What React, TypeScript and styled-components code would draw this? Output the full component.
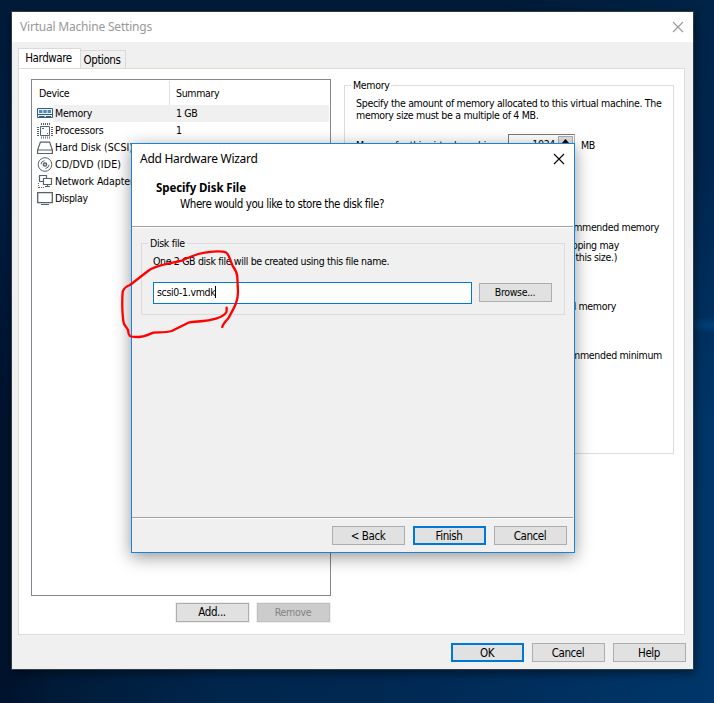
import React from "react";
import styled, { createGlobalStyle, css } from "styled-components";

const small = css`
  font-family: "DejaVu Sans Condensed", "DejaVu Sans", sans-serif;
  font-stretch: condensed;
  font-size: 10.5px;
  letter-spacing: -0.33px;
`;
const regular = css`
  font-family: "DejaVu Sans Condensed", "DejaVu Sans", sans-serif;
  font-stretch: condensed;
  font-size: 11.5px;
  letter-spacing: -0.43px;
`;

const GlobalStyle = createGlobalStyle`
  * { box-sizing: border-box; }
  body { margin: 0; overflow: hidden; color: #000; ${small} }
`;

const Desktop = styled.div`
  position: relative;
  width: 714px;
  height: 703px;
  padding: 11px 0 0 11px;
  background:
    radial-gradient(ellipse 40px 8px at 712px 325px, #004078, transparent),
    linear-gradient(100deg, transparent 60%, rgba(0, 64, 120, 0.35) 97%),
    linear-gradient(180deg, #001b38 0, #001d40 25%, transparent 60%),
    linear-gradient(90deg, #00122c 0, #001b38 8%, #00264d 32%, #002a55 70%, #003162 100%);
`;

const Window = styled.main`
  width: 683px;
  height: 659px;
  display: flex;
  flex-direction: column;
  border: 1px solid #2c3c48;
  background: #f0f0f0;
  box-shadow: 1px 3px 9px rgba(0, 0, 0, 0.5);
`;

const TitleBar = styled.header<{ $active?: boolean }>`
  flex: none;
  height: 30px;
  display: flex;
  align-items: center;
  justify-content: space-between;
  padding: 0 9px 1px 8px;
  background: #fff;
  color: ${(p) => (p.$active ? "#000" : "#999")};
  font: 12px/28px "Noto Sans", sans-serif;
  letter-spacing: ${(p) => (p.$active ? "-0.27px" : "-0.2px")};
`;

const TabStrip = styled.nav`
  flex: none;
  height: 26px;
  padding: 6px 0 0 6px;
  display: flex;
  align-items: flex-end;
`;

const Tab = styled.div<{ $active?: boolean }>`
  ${regular}
  width: ${(p) => (p.$active ? 63 : 45)}px;
  height: ${(p) => (p.$active ? 21 : 18)}px;
  margin-bottom: ${(p) => (p.$active ? -1 : 0)}px;
  padding: 1px 2px 0 0;
  border: 1px solid #d9d9d9;
  border-left-width: ${(p) => (p.$active ? 1 : 0)}px;
  border-bottom: 0;
  background: ${(p) => (p.$active ? "#fff" : "#f0f0f0")};
  text-align: center;
  line-height: 17px;
`;

const Panel = styled.section`
  flex: none;
  width: 667px;
  height: 567px;
  margin-left: 6px;
  padding: 10px 0 0 12px;
  display: flex;
  gap: 13px;
  border: 1px solid #dcdcdc;
  background: #fff;
`;

const DeviceColumn = styled.div`
  width: 300px;
`;

const DeviceList = styled.div`
  height: 517px;
  border: 1px solid #828790;
`;

const ListHeader = styled.div`
  display: flex;
  height: 25px;
  padding-top: 1px;
  line-height: 25px;
`;

const HeaderCell = styled.div<{ $first?: boolean }>`
  width: ${(p) => (p.$first ? "138px" : "auto")};
  padding-left: ${(p) => (p.$first ? 7 : 6)}px;
  border-right: ${(p) => (p.$first ? "1px solid #e0e0e0" : "0")};
`;

const DeviceRow = styled.div`
  display: flex;
  height: 17px;
  padding: 0 1px 0 5px;
  line-height: 17px;
  white-space: nowrap;
`;

const DeviceCells = styled.div<{ $selected?: boolean }>`
  flex: 1;
  display: grid;
  grid-template-columns: 121px 1fr;
  padding-left: 2px;
  background: ${(p) => (p.$selected ? "#f0f0f0" : "transparent")};
`;

const DeviceName = styled.span<{ $spacing: number }>`
  letter-spacing: ${(p) => p.$spacing}px;
`;

const ButtonRow = styled.div<{ $top: number; $right: number }>`
  display: flex;
  justify-content: flex-end;
  gap: 8px;
  padding: ${(p) => p.$top}px ${(p) => p.$right}px 0 0;
`;

const Button = styled.button<{ $primary?: boolean; $halo?: boolean; $small?: boolean }>`
  ${(p) => (p.$small ? small : regular)}
  flex: none;
  width: 73px;
  height: 19px;
  padding: ${(p) => (p.$small || p.$halo ? "0 1px 0 0" : "2px 1px 0 0")};
  border: ${(p) => (p.$primary ? "2px solid #0078d7" : "1px solid #adadad")};
  border-radius: 0;
  background: #e1e1e1;
  color: #000;
  line-height: ${(p) => (p.$primary ? 13 : 15)}px;
  box-shadow: ${(p) => (p.$halo ? "0 0 0 1px #f0f0f0" : "none")};

  &:disabled {
    border-color: #bfbfbf;
    background: #ccc;
    color: #838383;
  }
`;

const Group = styled.div<{ $surface: string }>`
  border: 1px solid #dcdcdc;
  background: ${(p) => p.$surface};
`;

const MemoryGroup = styled(Group)`
  width: 330px;
  height: 369px;
  margin-top: 6px;
  white-space: nowrap;
`;

const GroupLabel = styled.div<{ $surface: string }>`
  width: fit-content;
  margin: -8px 0 0 6px;
  padding: 0 2px;
  background: ${(p) => p.$surface};
  line-height: 15px;
`;

const Description = styled.p`
  margin: 4px 0 0 11px;
  line-height: 12px;
  letter-spacing: -0.31px;
`;

const MemoryField = styled.div`
  display: grid;
  grid-template-columns: 146px 67px auto;
  column-gap: 6px;
  margin: 13px 0 0 11px;
  line-height: 23px;
`;

const Spinner = styled.div`
  display: flex;
  justify-content: space-between;
  height: 23px;
  padding: 1px;
  border: 1px solid #7a7a7a;
  border-right-color: #b0b4bb;
  line-height: 17px;
`;

const SpinnerValue = styled.span`
  flex: 1;
  padding-right: 3px;
  text-align: right;
  line-height: 16px;
`;

const SpinnerButton = styled.span`
  width: 15px;
  height: 10px;
  display: flex;
  justify-content: center;
  padding-top: 2px;
  border: 1px solid #adadad;
  background: #e1e1e1;
`;

const Note = styled.div<{ $top: number; $right: number }>`
  margin-top: ${(p) => p.$top}px;
  padding-right: ${(p) => p.$right}px;
  text-align: right;
  line-height: 12px;
`;

const Dialog = styled.section`
  position: absolute;
  left: 131px;
  top: 143px;
  width: 444px;
  height: 410px;
  display: flex;
  flex-direction: column;
  border: 1px solid #1883d7;
  background: #f0f0f0;
  box-shadow: 0 4px 16px rgba(0, 0, 0, 0.42);
`;

const WizardHeading = styled.div`
  flex: none;
  height: 52px;
  padding-top: 6px;
  background: #fff;
`;

const Heading = styled.h1`
  margin: 0 0 0 24px;
  font: bold 11.5px/16px "Noto Sans", sans-serif;
  letter-spacing: -0.1px;
`;

const Question = styled.p`
  ${regular}
  margin: 0 0 0 48px;
  line-height: 17px;
`;

const Rule = styled.div`
  flex: none;
  height: 2px;
  margin-right: 1px;
  border-top: 1px solid #a0a0a0;
  background: #fff;
`;

const WizardBody = styled.div`
  height: 289px;
  padding: 15px 9px 0;
`;

const DiskGroup = styled(Group)`
  height: 72px;
`;

const DiskText = styled.p`
  margin: 3px 0 0 11px;
  line-height: 14px;
  letter-spacing: -0.35px;
`;

const FileRow = styled.div`
  display: flex;
  align-items: flex-start;
  gap: 7px;
  margin: 14px 0 0 11px;

  ${Button} {
    margin-top: 1px;
  }
`;

const FileInput = styled.div`
  width: 319px;
  height: 22px;
  display: flex;
  align-items: center;
  padding: 0 0 2px 3px;
  border: 1px solid #0078d7;
  background: #fff;
`;

const Caret = styled.span`
  width: 1px;
  height: 12px;
  background: #000;
`;

const Annotation = styled.svg`
  position: absolute;
  left: 110px;
  top: 240px;
  pointer-events: none;
`;

const Icon = styled.svg`
  flex: none;
  display: block;
  width: 16px;
  height: 17px;
  fill: none;
  stroke: #53636e;
`;

function CloseIcon() {
  return (
    <svg width="12" height="12" viewBox="0 0 12 12" stroke="currentColor" strokeWidth="1.1">
      <path d="M1 1 11 11M11 1 1 11" />
    </svg>
  );
}

const drawings: Record<string, React.ReactNode> = {
  Memory: (
    <g stroke="#315f87">
      <path fill="#e8f2fa" d="M.5 3.5h15v9H.5z" />
      <path fill="#5689b3" stroke="none" d="M2 5h3.4v3H2zM6.3 5h3.4v3H6.3zM10.6 5H14v3h-3.4z" />
      <path d="M.5 9.5h15M2 11.5h5.5M9 11.5h5" />
    </g>
  ),
  Processors: (
    <>
      <path d="M3.5 4.5h9v9h-9z" />
      <path
        strokeDasharray="1 1"
        d="M4 1.5h9M4 16h9M.5 5v9M15.5 5v9M4 2.5h9M4 15h9M1.5 5v9M14.5 5v9"
      />
      <path d="M5 6.5h2M10 11.5h1" />
    </>
  ),
  "Hard Disk (SCSI)": (
    <path strokeWidth="1.2" d="M3.4 3.1h9.2L15.4 11H.6zM.6 11h14.8v3.5H.6z" />
  ),
  "CD/DVD (IDE)": (
    <>
      <circle cx="8" cy="8.5" r="6.8" />
      <circle cx="8" cy="8.5" r="1.6" strokeWidth="1.5" />
      <path d="M4 8.3A4 4 0 0 1 7.5 4.7M12 8.8a4 4 0 0 1-3.5 3.6" />
    </>
  ),
  "Network Adapter": (
    <>
      <path strokeWidth="1.2" d="M6 8.5H2.5v-6h7v3M6.5 5.5h8v6h-8zM3 8.5h3M10.5 12v2M8 13.5h5" />
      <path strokeDasharray="1 1" d="M1.5 10v5M2 14.5h6" />
    </>
  ),
  Display: (
    <>
      <path strokeWidth="1.3" d="M.7 2.7h14.6v10H.7z" />
      <path d="M4 14.5h8" />
    </>
  ),
};

const devices = [
  { name: "Memory", summary: "1 GB", spacing: -0.24 },
  { name: "Processors", summary: "1", spacing: -0.2 },
  { name: "Hard Disk (SCSI)", summary: "", spacing: 0.02 },
  { name: "CD/DVD (IDE)", summary: "", spacing: 0.15 },
  { name: "Network Adapter", summary: "", spacing: -0.07 },
  { name: "Display", summary: "", spacing: -0.3 },
];

export default function App() {
  return (
    <Desktop>
      <GlobalStyle />
      <Window>
        <TitleBar>
          Virtual Machine Settings
          <CloseIcon />
        </TitleBar>
        <TabStrip>
          <Tab $active>Hardware</Tab>
          <Tab>Options</Tab>
        </TabStrip>
        <Panel>
          <DeviceColumn>
            <DeviceList>
              <ListHeader>
                <HeaderCell $first>Device</HeaderCell>
                <HeaderCell>Summary</HeaderCell>
              </ListHeader>
              {devices.map(({ name, summary, spacing }, i) => (
                <DeviceRow key={name}>
                  <Icon viewBox="0 0 16 17">{drawings[name]}</Icon>
                  <DeviceCells $selected={i === 0}>
                    <DeviceName $spacing={spacing}>{name}</DeviceName>
                    <span>{summary}</span>
                  </DeviceCells>
                </DeviceRow>
              ))}
            </DeviceList>
            <ButtonRow $top={7} $right={1}>
              <Button $halo>Add...</Button>
              <Button $halo $small disabled>
                Remove
              </Button>
            </ButtonRow>
          </DeviceColumn>
          <MemoryGroup $surface="#fff">
            <GroupLabel $surface="#fff">Memory</GroupLabel>
            <Description>
              Specify the amount of memory allocated to this virtual machine. The
              <br />
              memory size must be a multiple of 4 MB.
            </Description>
            <MemoryField>
              <span>Memory for this virtual machine:</span>
              <Spinner>
                <SpinnerValue>1024</SpinnerValue>
                <SpinnerButton>
                  <svg width="7" height="4" viewBox="0 0 7 4">
                    <path d="M0 4 3.5 0 7 4z" />
                  </svg>
                </SpinnerButton>
              </Spinner>
              <span>MB</span>
            </MemoryField>
            <Note $top={64} $right={14}>Maximum recommended memory</Note>
            <Note $top={6} $right={54}>(Memory swapping may</Note>
            <Note $top={0} $right={56}>occur beyond this size.)</Note>
            <Note $top={37} $right={57}>Recommended memory</Note>
            <Note $top={37} $right={11}>Guest OS recommended minimum</Note>
          </MemoryGroup>
        </Panel>
        <ButtonRow $top={8} $right={7}>
          <Button $primary>OK</Button>
          <Button>Cancel</Button>
          <Button>Help</Button>
        </ButtonRow>
      </Window>

      <Dialog>
        <TitleBar $active>
          Add Hardware Wizard
          <CloseIcon />
        </TitleBar>
        <WizardHeading>
          <Heading>Specify Disk File</Heading>
          <Question>Where would you like to store the disk file?</Question>
        </WizardHeading>
        <Rule />
        <WizardBody>
          <DiskGroup $surface="#f0f0f0">
            <GroupLabel $surface="#f0f0f0">Disk file</GroupLabel>
            <DiskText>One 2 GB disk file will be created using this file name.</DiskText>
            <FileRow>
              <FileInput>
                scsi0-1.vmdk
                <Caret />
              </FileInput>
              <Button $small>Browse...</Button>
            </FileRow>
          </DiskGroup>
        </WizardBody>
        <Rule />
        <ButtonRow $top={7} $right={7}>
          <Button>&lt; Back</Button>
          <Button $primary>Finish</Button>
          <Button>Cancel</Button>
        </ButtonRow>
      </Dialog>

      <Annotation width="140" height="110" viewBox="110 240 140 110">
        <path
          fill="none"
          stroke="#f00"
          strokeWidth="2.3"
          strokeLinecap="round"
          strokeLinejoin="round"
          d="M226.7 307.7 226.5 312Q224 316 216.7 318.3C205 322 195 321 188.3 322.7L171.7 331C165 333 158 332 153.3 332.7 147 335 144 337 138.3 337 133 337 131 337 130 336 127 333 129 330 127.7 329.3L124 324C122 316 122 300 122.7 291.7 124 288 127 286 130 285L148 271C157 264 170 264 181.7 260.7 187 258 193 256 198.3 254 205 252 221 250 226 252.5 229 254 230 260 232.7 266 235 269 237 273 237.3 276.7L238 291.7C238 302 234 308 228.3 318.3 225 322 223 324 222.3 327"
        />
      </Annotation>
    </Desktop>
  );
}
